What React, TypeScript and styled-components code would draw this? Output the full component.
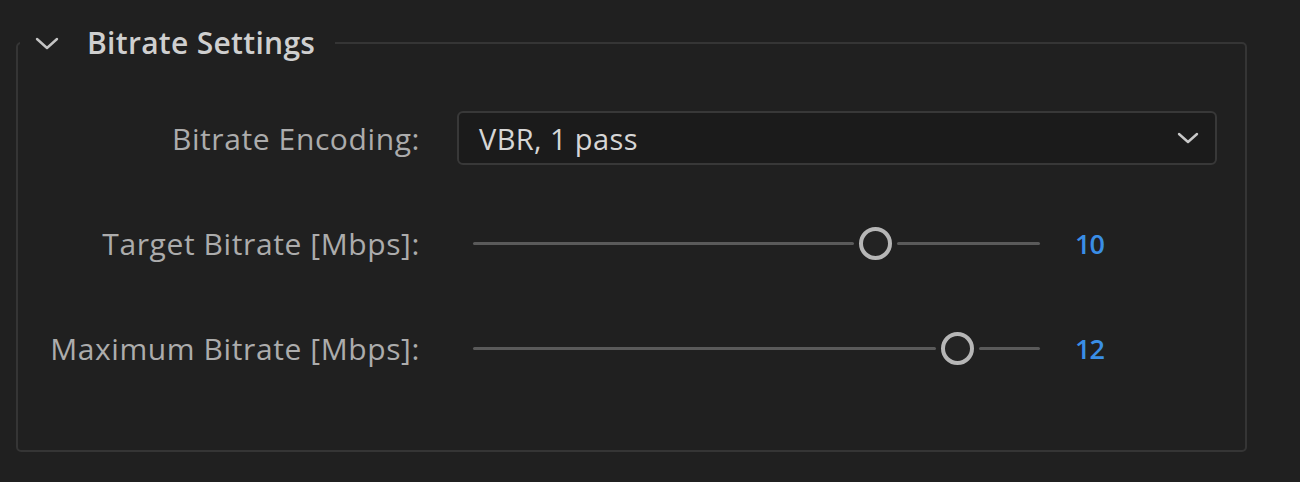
import React from "react";
import styled, { createGlobalStyle } from "styled-components";

const Global = createGlobalStyle`
  html, body { margin: 0; padding: 0; background: #202020; }
  body { font-family: "Open Sans", "Noto Sans", sans-serif; }
`;

const Page = styled.div`
  width: 1300px;
  height: 482px;
  box-sizing: border-box;
  padding: 0 0 0 16px;
  background: #202020;
  overflow: hidden;
`;

const Group = styled.fieldset`
  box-sizing: border-box;
  width: 1231px;
  margin: 24px 0 0 0;
  padding: 0 0 75px 0;
  border: 2px solid #353535;
  border-radius: 5px;
  min-width: 0;
`;

const Legend = styled.legend`
  display: flex;
  align-items: center;
  gap: 28px;
  margin-left: 2px;
  padding: 0 20px 0 15px;
  color: #cfcfcf;
  font-size: 30px;
  font-weight: 600;
  letter-spacing: 0.3px;
  line-height: 38px;
`;

const Chevron = styled.svg<{ $w: number; $h: number }>`
  width: ${(p) => p.$w}px;
  height: ${(p) => p.$h}px;
  flex: none;
  display: block;
`;

const Form = styled.div`
  display: grid;
  grid-template-columns: 402px 760px;
  column-gap: 37px;
  row-gap: 51px;
  padding-top: 49px;
`;

const Label = styled.div`
  height: 54px;
  display: flex;
  align-items: center;
  justify-content: flex-end;
  color: #acacac;
  font-size: 30px;
  letter-spacing: 0.6px;
  white-space: nowrap;
`;

const Select = styled.div`
  box-sizing: border-box;
  height: 54px;
  display: flex;
  align-items: center;
  justify-content: space-between;
  padding: 0 16px 0 20px;
  background: #1b1b1b;
  border: 2px solid #383838;
  border-radius: 6px;
  color: #d6d6d6;
  font-size: 29px;
  letter-spacing: 0.4px;
`;

const SliderCell = styled.div`
  height: 54px;
  display: flex;
  align-items: center;
  padding-left: 16px;
`;

const Track = styled.div`
  width: 567px;
  display: flex;
  align-items: center;
`;

const TrackPart = styled.div<{ $grow: number }>`
  flex: ${(p) => p.$grow} 1 0;
  height: 3px;
  background: #5a5a5a;
  border-radius: 2px;
`;

const Thumb = styled.div`
  box-sizing: border-box;
  flex: none;
  width: 33px;
  height: 33px;
  margin: 0 5px;
  border-radius: 50%;
  border: 4px solid #b6b6b6;
  background: #232323;
`;

const Value = styled.div`
  margin-left: 35px;
  color: #3a8ee6;
  font-size: 27px;
  font-weight: 600;
  letter-spacing: -1px;
`;

const sliders = [
  { label: "Target Bitrate [Mbps]:", value: 10, pos: 0.727 },
  { label: "Maximum Bitrate [Mbps]:", value: 12, pos: 0.884 },
];

export default function App() {
  return (
    <Page>
      <Global />
      <Group>
        <Legend>
          <Chevron $w={24} $h={13} viewBox="0 0 24 13">
            <path d="M2 2 L12 11 L22 2" fill="none" stroke="#c4c4c4" strokeWidth="2.4" strokeLinecap="round" strokeLinejoin="round" />
          </Chevron>
          Bitrate Settings
        </Legend>
        <Form>
          <Label>Bitrate Encoding:</Label>
          <Select>
            <span>VBR, 1 pass</span>
            <Chevron $w={22} $h={12} viewBox="0 0 22 12">
              <path d="M2 2 L11 10 L20 2" fill="none" stroke="#c8c8c8" strokeWidth="2.4" strokeLinecap="round" strokeLinejoin="round" />
            </Chevron>
          </Select>
          {sliders.map((s) => (
            <React.Fragment key={s.label}>
              <Label>{s.label}</Label>
              <SliderCell>
                <Track>
                  <TrackPart $grow={s.pos} />
                  <Thumb />
                  <TrackPart $grow={1 - s.pos} />
                </Track>
                <Value>{s.value}</Value>
              </SliderCell>
            </React.Fragment>
          ))}
        </Form>
      </Group>
    </Page>
  );
}
